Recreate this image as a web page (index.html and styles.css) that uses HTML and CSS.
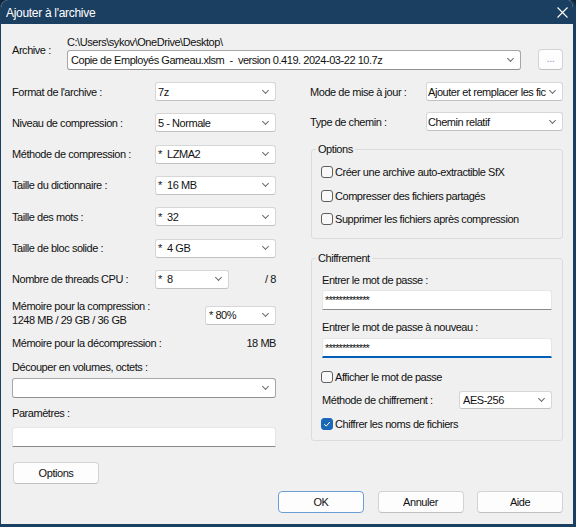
FILE: index.html
```html
<!DOCTYPE html>
<html>
<head>
<meta charset="utf-8">
<link rel="stylesheet" href="styles.css">
</head>
<body>
<div class="window">
  <div class="titlebar">
    <span class="title">Ajouter à l'archive</span>
    <svg class="close" width="11" height="11" viewBox="0 0 11 11"><path d="M0.5 0.5L10.5 10.5M10.5 0.5L0.5 10.5" stroke="#fff" stroke-width="1.1"/></svg>
  </div>

  <div class="content">
    <div class="archive-row">
      <div class="archive-label">Archive :</div>
      <div class="archive-field">
        <div class="path">C:\Users\sykov\OneDrive\Desktop\</div>
        <div class="combo edit"><span class="value">Copie de Employés Gameau.xlsm&nbsp; - &nbsp;version 0.419. 2024-03-22 10.7z</span></div>
      </div>
      <button class="btn browse">...</button>
    </div>

    <div class="columns">
      <div class="col-left">
        <div class="row"><span class="lbl">Format de l'archive :</span><div class="combo"><span class="value">7z</span></div></div>
        <div class="row"><span class="lbl">Niveau de compression :</span><div class="combo"><span class="value">5 - Normale</span></div></div>
        <div class="row"><span class="lbl">Méthode de compression :</span><div class="combo"><span class="value">*&nbsp; LZMA2</span></div></div>
        <div class="row"><span class="lbl">Taille du dictionnaire :</span><div class="combo"><span class="value">*&nbsp; 16 MB</span></div></div>
        <div class="row"><span class="lbl">Taille des mots :</span><div class="combo"><span class="value">*&nbsp; 32</span></div></div>
        <div class="row"><span class="lbl">Taille de bloc solide :</span><div class="combo"><span class="value">*&nbsp; 4 GB</span></div></div>
        <div class="row threads"><span class="lbl">Nombre de threads CPU :</span><div class="combo small"><span class="value">*&nbsp; 8</span></div><span class="max">/ 8</span></div>

        <div class="mem">
          <div class="mem-text">Mémoire pour la compression :<br>1248 MB / 29 GB / 36 GB</div>
          <div class="combo pct"><span class="value">* 80%</span></div>
        </div>
        <div class="decomp"><span>Mémoire pour la décompression :</span><span>18 MB</span></div>

        <div class="field-label split-label">Découper en volumes, octets :</div>
        <div class="combo edit full"><span class="value"></span></div>

        <div class="field-label params-label">Paramètres :</div>
        <div class="textbox params"></div>

        <button class="btn options-btn">Options</button>
      </div>

      <div class="col-right">
        <div class="rrow"><span>Mode de mise à jour :</span><div class="combo wide"><span class="value">Ajouter et remplacer les fichiers</span></div></div>
        <div class="rrow second"><span>Type de chemin :</span><div class="combo wide"><span class="value">Chemin relatif</span></div></div>

        <fieldset class="group options-group">
          <legend>Options</legend>
          <label class="check"><span class="box"></span>Créer une archive auto-extractible SfX</label>
          <label class="check"><span class="box"></span>Compresser des fichiers partagés</label>
          <label class="check"><span class="box"></span>Supprimer les fichiers après compression</label>
        </fieldset>

        <fieldset class="group crypt-group">
          <legend>Chiffrement</legend>
          <div class="pw-label">Entrer le mot de passe :</div>
          <div class="textbox pw"><span class="stars">*************</span></div>
          <div class="pw-label again">Entrer le mot de passe à nouveau :</div>
          <div class="textbox pw focused"><span class="stars">*************</span></div>
          <label class="check show-pw"><span class="box"></span>Afficher le mot de passe</label>
          <div class="crow"><span>Méthode de chiffrement :</span><div class="combo aes"><span class="value">AES-256</span></div></div>
          <label class="check names"><span class="box checked"><svg width="10" height="10" viewBox="0 0 10 10"><path d="M2.2 5.2L4.2 7.1L7.9 3" fill="none" stroke="#fff" stroke-width="1"/></svg></span>Chiffrer les noms de fichiers</label>
        </fieldset>
      </div>
    </div>

    <div class="footer">
      <button class="btn default">OK</button>
      <button class="btn">Annuler</button>
      <button class="btn">Aide</button>
    </div>
  </div>
</div>
</body>
</html>
```

FILE: styles.css
```css
* {
  box-sizing: border-box;
}

body {
  margin: 0;
  background: #10263b;
  font-family: "Liberation Sans", Arial, sans-serif;
  font-size: 11px;
  letter-spacing: -0.45px;
  color: #111;
  white-space: nowrap;
}

.window {
  width: 576px;
  height: 527px;
  background: #f0f0f0;
  border-left: 1px solid #1b3f61;
  border-right: 3px solid #1b3f61;
  border-bottom: 3px solid #1b3f61;
  border-radius: 8px 8px 0 0;
  overflow: hidden;
}

.titlebar {
  height: 24px;
  background: #1b3f61;
  color: #fff;
  display: flex;
  align-items: center;
  justify-content: space-between;
  padding: 0 5px 0 5px;
}

.title {
  font-size: 12px;
  letter-spacing: -0.3px;
  margin-top: 1px;
}

.close {
  margin-top: 1px;
}

.content {
  padding: 0 10px 0 11px;
}

/* archive path + name */
.archive-row {
  display: flex;
  margin-top: 11px;
}
.archive-label {
  width: 55px;
  margin-top: 8px;
  line-height: 14px;
}
.archive-field {
  width: 454px;
}
.path {
  line-height: 14px;
  margin-bottom: 1px;
}
.btn.browse {
  width: 25px;
  height: 21px;
  margin: 14px 0 0 17px;
  color: #a08fc0;
  padding: 0 0 4px;
}

/* combo boxes */
.combo {
  display: flex;
  align-items: center;
  height: 19px;
  width: 121px;
  padding: 0 7px 0 2px;
  background: #fff;
  border: 1px solid #d6d6d6;
  border-bottom-color: #c2c2c2;
  border-radius: 3px;
}
.combo .value {
  flex: 1;
  min-width: 0;
  overflow: hidden;
}
.combo::after {
  content: "";
  flex: none;
  width: 4px;
  height: 4px;
  margin: -3px 0 0 4px;
  border-right: 1px solid #6a6a6a;
  border-bottom: 1px solid #6a6a6a;
  transform: rotate(45deg);
}
.combo.edit {
  height: 20px;
  width: auto;
  border-color: #a6a6a6;
  border-bottom-color: #8f8f8f;
}
.combo.edit .value {
  padding-left: 1px;
}

.columns {
  display: flex;
  margin-top: 12px;
}

.col-left {
  width: 264px;
  flex: none;
}

.col-right {
  width: 253px;
  flex: none;
  margin-left: 34px;
}

.row {
  display: flex;
  align-items: center;
  justify-content: space-between;
  height: 19px;
  margin-bottom: 12.33px;
}
.row.threads {
  margin-bottom: 10px;
}
.row.threads .lbl {
  width: 143px;
}
.combo.small {
  width: 74px;
}
.max {
  margin-left: auto;
}

.mem {
  display: flex;
  justify-content: space-between;
}
.mem-text {
  line-height: 14px;
}
.combo.pct {
  width: 71px;
  margin-top: 7px;
  padding-left: 3px;
}

.decomp {
  display: flex;
  justify-content: space-between;
  line-height: 14px;
  margin-top: 9px;
}

.field-label {
  line-height: 14px;
}
.split-label {
  margin-top: 10px;
  margin-bottom: 4px;
}
.params-label {
  margin-top: 8px;
  margin-bottom: 7px;
}

.textbox {
  height: 20px;
  background: #fff;
  border: 1px solid #e6e6e6;
  border-bottom-color: #8a8a8a;
  border-radius: 3px 3px 0 0;
}

/* buttons */
.btn {
  font-family: inherit;
  font-size: 11px;
  letter-spacing: -0.45px;
  color: #111;
  background: #fdfdfd;
  border: 1px solid #d3d3d3;
  border-bottom-color: #c0c0c0;
  border-radius: 4px;
  padding: 0;
}
.options-btn {
  display: block;
  width: 86px;
  height: 22px;
  margin: 15px 0 0 1px;
}

/* right column */
.rrow {
  display: flex;
  align-items: center;
  justify-content: space-between;
  height: 19px;
}
.rrow.second {
  margin-top: 11px;
}
.combo.wide {
  width: 137px;
  padding-left: 1px;
}

.group {
  margin: 11px 0 0 1px;
  padding: 8px 10px 11px 10px;
  border: 1px solid #dcdcdc;
  border-radius: 3px;
  min-width: 0;
}
.group legend {
  padding: 0 2px;
  margin-left: -6px;
  line-height: 14px;
}

.check {
  display: flex;
  align-items: center;
  height: 16px;
  margin-left: -1px;
}
.check + .check {
  margin-top: 7.5px;
}
.box {
  flex: none;
  display: flex;
  align-items: center;
  justify-content: center;
  width: 12px;
  height: 12px;
  margin-right: 2px;
  background: #f8f8f8;
  border: 1px solid #5f5f5f;
  border-radius: 3px;
}
.box.checked {
  background: #1c68b8;
  border-color: #1c68b8;
}

.crypt-group {
  margin-top: 12px;
  padding-bottom: 8px;
}
.pw-label {
  line-height: 14px;
}
.pw-label.again {
  margin-top: 10px;
}
.textbox.pw {
  margin-top: 3px;
  padding: 2px 0 0 2px;
  line-height: 14px;
  font-size: 11px;
}
.pw-label.again + .textbox {
  margin-top: 4px;
}
.textbox.focused {
  border-bottom: 2px solid #005fb8;
}
.stars {
  letter-spacing: -0.9px;
}
.check.show-pw {
  margin-top: 11px;
}
.crow {
  display: flex;
  align-items: center;
  justify-content: space-between;
  height: 18px;
  margin-top: 6px;
}
.combo.aes {
  width: 93px;
  height: 18px;
  padding-left: 3px;
}
.check.names {
  margin-top: 7px;
}

/* dialog buttons */
.footer {
  display: flex;
  justify-content: flex-end;
  gap: 13.5px;
  margin-top: 7px;
}
.footer .btn {
  width: 86px;
  height: 22px;
}
.btn.default {
  border-color: #6a9fd6;
}
```
